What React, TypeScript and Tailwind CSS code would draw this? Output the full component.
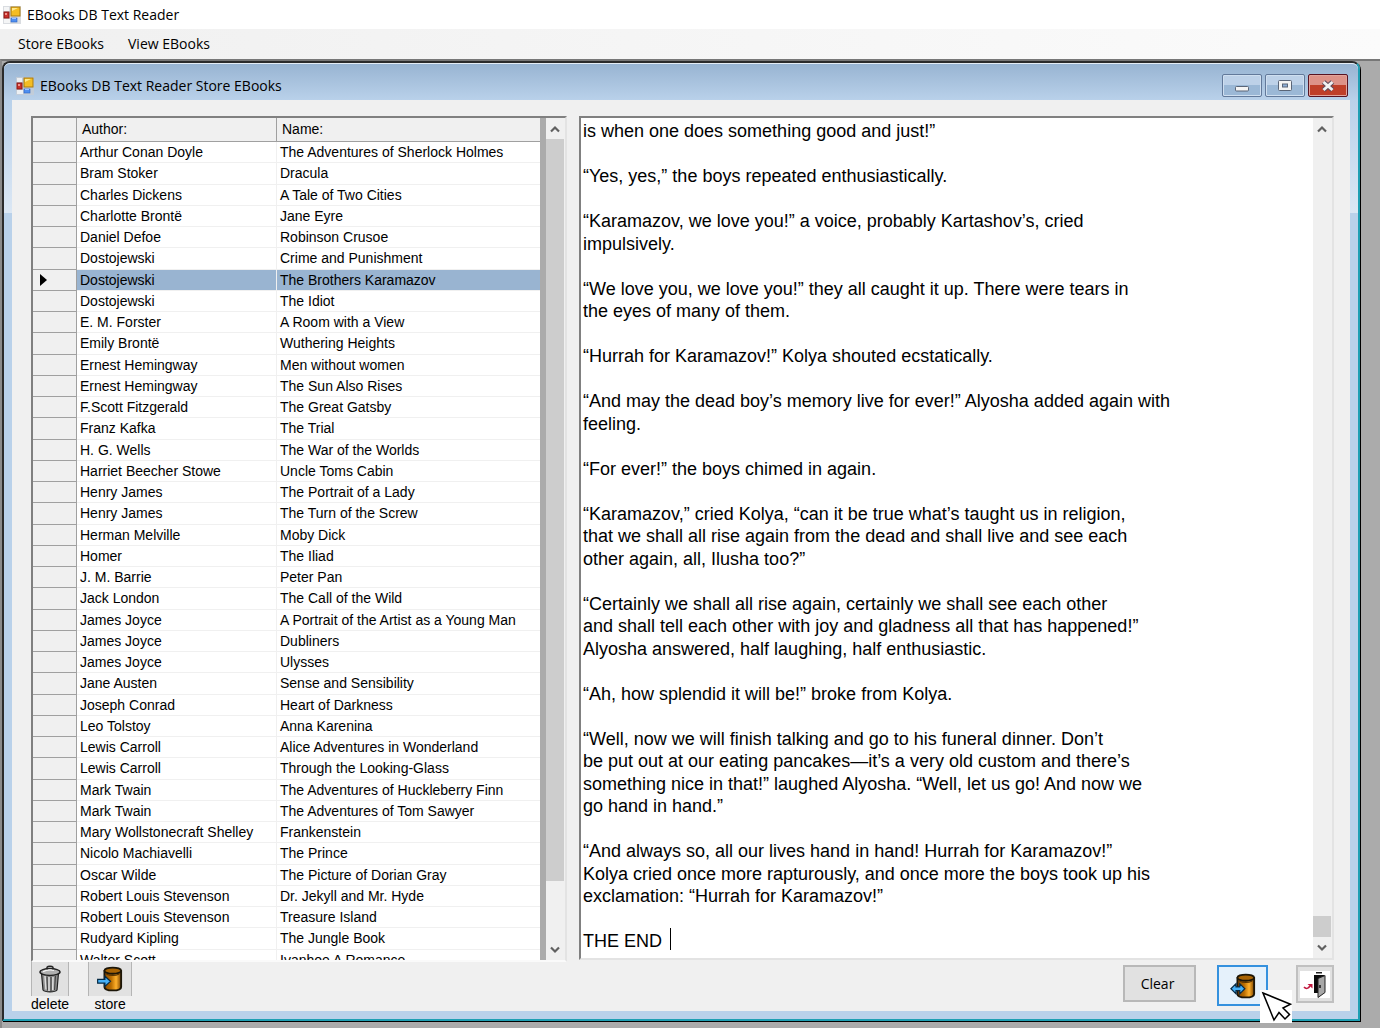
import { useState } from 'react';

const BOOKS: [string, string][] = [
  ['Arthur Conan Doyle', 'The Adventures of Sherlock Holmes'],
  ['Bram Stoker', 'Dracula'],
  ['Charles Dickens', 'A Tale of Two Cities'],
  ['Charlotte Brontë', 'Jane Eyre'],
  ['Daniel Defoe', 'Robinson Crusoe'],
  ['Dostojewski', 'Crime and Punishment'],
  ['Dostojewski', 'The Brothers Karamazov'],
  ['Dostojewski', 'The Idiot'],
  ['E. M. Forster', 'A Room with a View'],
  ['Emily Brontë', 'Wuthering Heights'],
  ['Ernest Hemingway', 'Men without women'],
  ['Ernest Hemingway', 'The Sun Also Rises'],
  ['F.Scott Fitzgerald', 'The Great Gatsby'],
  ['Franz Kafka', 'The Trial'],
  ['H. G. Wells', 'The War of the Worlds'],
  ['Harriet Beecher Stowe', 'Uncle Toms Cabin'],
  ['Henry James', 'The Portrait of a Lady'],
  ['Henry James', 'The Turn of the Screw'],
  ['Herman Melville', 'Moby Dick'],
  ['Homer', 'The Iliad'],
  ['J. M. Barrie', 'Peter Pan'],
  ['Jack London', 'The Call of the Wild'],
  ['James Joyce', 'A Portrait of the Artist as a Young Man'],
  ['James Joyce', 'Dubliners'],
  ['James Joyce', 'Ulysses'],
  ['Jane Austen', 'Sense and Sensibility'],
  ['Joseph Conrad', 'Heart of Darkness'],
  ['Leo Tolstoy', 'Anna Karenina'],
  ['Lewis Carroll', 'Alice Adventures in Wonderland'],
  ['Lewis Carroll', 'Through the Looking-Glass'],
  ['Mark Twain', 'The Adventures of Huckleberry Finn'],
  ['Mark Twain', 'The Adventures of Tom Sawyer'],
  ['Mary Wollstonecraft Shelley', 'Frankenstein'],
  ['Nicolo Machiavelli', 'The Prince'],
  ['Oscar Wilde', 'The Picture of Dorian Gray'],
  ['Robert Louis Stevenson', 'Dr. Jekyll and Mr. Hyde'],
  ['Robert Louis Stevenson', 'Treasure Island'],
  ['Rudyard Kipling', 'The Jungle Book'],
  ['Walter Scott', 'Ivanhoe A Romance'],
];

const BOOK_TEXT = `is when one does something good and just!”

“Yes, yes,” the boys repeated enthusiastically.

“Karamazov, we love you!” a voice, probably Kartashov’s, cried
impulsively.

“We love you, we love you!” they all caught it up. There were tears in
the eyes of many of them.

“Hurrah for Karamazov!” Kolya shouted ecstatically.

“And may the dead boy’s memory live for ever!” Alyosha added again with
feeling.

“For ever!” the boys chimed in again.

“Karamazov,” cried Kolya, “can it be true what’s taught us in religion,
that we shall all rise again from the dead and shall live and see each
other again, all, Ilusha too?”

“Certainly we shall all rise again, certainly we shall see each other
and shall tell each other with joy and gladness all that has happened!”
Alyosha answered, half laughing, half enthusiastic.

“Ah, how splendid it will be!” broke from Kolya.

“Well, now we will finish talking and go to his funeral dinner. Don’t
be put out at our eating pancakes—it’s a very old custom and there’s
something nice in that!” laughed Alyosha. “Well, let us go! And now we
go hand in hand.”

“And always so, all our lives hand in hand! Hurrah for Karamazov!”
Kolya cried once more rapturously, and once more the boys took up his
exclamation: “Hurrah for Karamazov!”

THE END`;

function FormIcon() {
  return (
    <svg className="h-[18px] w-[18px] shrink-0" viewBox="0 0 18 18" aria-hidden="true">
      <rect width="18" height="18" fill="#c9cdd3" opacity=".7" />
      <rect x="1" y="1" width="5" height="4" fill="#fff" opacity=".7" />
      <rect x="1" y="13" width="6" height="4" fill="#fff" opacity=".7" />
      <rect x="8" y="1" width="9" height="9" fill="#f4bd22" stroke="#a87a10" />
      <path d="M9 5V2h6z" fill="#ffe98c" />
      <rect x="1" y="6" width="5" height="6" fill="#c9302c" stroke="#8c1713" />
      <rect x="2" y="7" width="2" height="2" fill="#f0938c" />
      <rect x="8" y="12" width="6" height="4" fill="#4f8ff0" stroke="#2b62c4" strokeWidth=".6" />
      <rect x="9" y="12" width="4" height="1" fill="#9cc4ff" />
    </svg>
  );
}

function Chevron({ down }: { down?: boolean }) {
  return (
    <svg className="h-2 w-[10px]" viewBox="0 0 10 8" aria-hidden="true">
      <path d={down ? 'M1 1.5l4 4 4-4' : 'M1 6.5l4-4 4 4'} fill="none" stroke="#606060" strokeWidth="2.2" />
    </svg>
  );
}

function TrashIcon() {
  return (
    <svg className="h-7 w-6" viewBox="0 0 24 28" aria-hidden="true">
      <path d="M3.5 8l1.500 17c2 2.500 12 2.500 14 0l1.500-17z" fill="#8f8f8f" stroke="#222" strokeWidth="1.200" />
      <path d="M7 11l1 13.500M11 12v14M15 12l-.3 13" stroke="#dedede" strokeWidth="1.500" />
      <path d="M9 11.500l.5 14M13 12v14M17.500 11l-1 14" stroke="#444" strokeWidth="1.100" />
      <ellipse cx="12" cy="7" rx="10" ry="3.400" fill="#b0b0b0" stroke="#222" strokeWidth="1.500" />
      <path d="M5 6.800c3-2 8-2 11-1.500" stroke="#f4f4f4" strokeWidth="1.300" fill="none" />
      <path d="M9 4.500V2.200C10 1 14 1 15 2.200V4.500" stroke="#222" strokeWidth="1.400" fill="none" />
    </svg>
  );
}

function DatabaseIcon({ both }: { both?: boolean }) {
  return (
    <svg className="h-[26px] w-[26px]" viewBox="0 0 28 28" aria-hidden="true">
      <defs>
        <linearGradient id="barrel">
          <stop offset="0" stopColor="#8a4b00" />
          <stop offset=".4" stopColor="#b86c00" />
          <stop offset=".7" stopColor="#ffb12b" />
          <stop offset="1" stopColor="#7a4300" />
        </linearGradient>
      </defs>
      <path d="M8 5.500v17c0 5 18 5 18 0v-17z" fill="url(#barrel)" stroke="#1c1608" strokeWidth="2" />
      <ellipse cx="17" cy="5" rx="9" ry="3.300" fill="#a86303" stroke="#1c1608" strokeWidth="2" />
      <path d="M10 8.500c4 2 10 2 14 0" fill="none" stroke="#5c3500" strokeWidth="1.200" />
      {both ? (
        <path d="M1 17l5.500-5.500v3.500h4v-3.500L16 17l-5.500 5.500V19h-4v3.500z" fill="#45b0f7" stroke="#062a44" strokeWidth="1.300" />
      ) : (
        <path d="M.7 14.500h7.800v-3.500l6 5.500-6 5.500v-3.500H.7z" fill="#45b0f7" stroke="#062a44" strokeWidth="1.300" />
      )}
    </svg>
  );
}

function ExitIcon() {
  return (
    <svg className="h-[27px] w-[30px]" viewBox="0 0 30 27" aria-hidden="true">
      <rect width="30" height="27" fill="#fff" />
      <path d="M16 1h6v1.500h-6z" fill="#222" />
      <path d="M14 4h10v18H14z" fill="#0b0b0b" />
      <path d="M18 7.500l7-3v17l-7 5z" fill="#a7a7a7" stroke="#222" />
      <path d="M20 14v3" stroke="#111" strokeWidth="1.500" />
      <path d="M4 16c2 2.500 4.500 1.500 6-1" fill="none" stroke="#c2183f" strokeWidth="1.500" />
      <path d="M7.500 13h5v4.500z" fill="#c2183f" />
    </svg>
  );
}

function PointerIcon() {
  return (
    <svg className="pointer-events-none absolute top-[23px] left-[41px] h-[33px] w-8 bg-white" viewBox="0 0 32 33" aria-hidden="true">
      <path d="M3 3l27.500 11.200-7.500 3.800 6.500 6.500-4.500 4.500-6-6.500-5 7.500z" fill="#fff" stroke="#000" strokeWidth="1.500" />
    </svg>
  );
}

function ScrollBar({ thumb }: { thumb: 'top' | 'bottom' }) {
  return (
    <div className="flex w-[19px] shrink-0 flex-col bg-[#f0f0f0] pr-px">
      <button type="button" aria-label="Scroll up" className="flex h-[21px] items-center justify-center">
        <Chevron />
      </button>
      {thumb === 'bottom' && <div className="flex-1" />}
      <div className={thumb === 'top' ? 'h-[742px] bg-[#cdcdcd]' : 'h-[21px] bg-[#cdcdcd]'} />
      {thumb === 'top' && <div className="flex-1" />}
      <button type="button" aria-label="Scroll down" className="flex h-[21px] items-center justify-center">
        <Chevron down />
      </button>
    </div>
  );
}

const CAPTION_BUTTON =
  'flex h-[23px] w-10 items-center justify-center rounded-[2px] border border-[#62799a] bg-linear-to-b from-[#bdd1e8] from-50% to-[#9bb8d6] to-50% inset-ring inset-ring-[#cfdff0]';

function CaptionButtons() {
  return (
    <div className="flex gap-[3px]">
      <button type="button" aria-label="Minimize" className={CAPTION_BUTTON}>
        <svg className="h-[14px] w-4" viewBox="0 0 16 14">
          <rect x="1.500" y="7.500" width="13" height="4.500" rx="1" fill="#f4f4f4" stroke="#5a6577" />
        </svg>
      </button>
      <button type="button" aria-label="Maximize" className={CAPTION_BUTTON}>
        <svg className="h-[14px] w-4" viewBox="0 0 16 14">
          <rect x="1.500" y="1.500" width="13" height="10" rx="1" fill="#f4f4f4" stroke="#5a6577" />
          <rect x="5.500" y="5" width="5" height="3" fill="#8fb0d8" stroke="#5a6577" />
        </svg>
      </button>
      <button
        type="button"
        aria-label="Close"
        className="flex h-[23px] w-10 items-center justify-center rounded-[2px] border border-[#581322] bg-linear-to-b from-[#dd9288] from-50% to-[#bf3f29] to-50% inset-ring inset-ring-[#e2a49b]"
      >
        <svg className="h-[14px] w-4" viewBox="0 0 16 14">
          <path d="M3.500 3l9 8M12.500 3l-9 8" stroke="#5d4a5a" strokeWidth="5" />
          <path d="M3.500 3l9 8M12.500 3l-9 8" stroke="#f2f2f2" strokeWidth="3" />
        </svg>
      </button>
    </div>
  );
}

export default function App() {
  const [selected, setSelected] = useState(6);
  const [text, setText] = useState(BOOK_TEXT);

  return (
    <div className="flex h-screen flex-col overflow-hidden bg-[#ababab] font-['Open_Sans',sans-serif] text-sm text-black">
      <header className="flex h-[29px] shrink-0 items-center gap-[6px] bg-white pl-[3px]">
        <FormIcon />
        <h1>EBooks DB Text Reader</h1>
      </header>
      <nav className="flex h-[30px] shrink-0 items-center gap-6 bg-linear-to-r from-[#f0f0f0] to-[#fbfbfb] pl-[18px]">
        <button type="button">Store EBooks</button>
        <button type="button">View EBooks</button>
      </nav>

      <div className="flex min-h-0 flex-1 flex-col border-t-2 border-l-2 border-t-[#777] border-l-[#8a8a8a] pr-5 pb-[7px]">
        <section className="flex min-h-0 flex-1 flex-col rounded-t-lg border-2 border-[#2b2b2b] border-r-[#1e9fb3] border-b-[#1e9fb3] bg-[linear-gradient(to_bottom,#b9d1ea_37px,#dbe7f4_150px,#b9d1ea_150px)] px-2 pb-2 shadow-[1px_1px_0_#000]">
          <div className="-mx-2 flex h-[37px] shrink-0 items-center gap-[6px] rounded-t-md border-t border-[#e4edf6] bg-linear-to-b from-[#98b4d2] to-[#b9d1ea] pt-[7px] pr-[10px] pl-3">
            <FormIcon />
            <h2 className="flex-1">EBooks DB Text Reader Store EBooks</h2>
            <CaptionButtons />
          </div>

          <div className="flex min-h-0 flex-1 flex-col bg-[#f0f0f0] pt-4 pr-4 pl-[19px] font-['Liberation_Sans',sans-serif]">
            <div className="flex min-h-0 flex-1 gap-3">
              <div className="flex w-[536px] shrink-0 overflow-hidden border-2 border-t-[#808080] border-r-[#e3e3e3] border-b-[#fafafa] border-l-[#808080] bg-white">
                <div className="min-w-0 flex-1 overflow-hidden border-r-[6px] border-[#ababab]">
                  <table className="h-[853px] w-full table-fixed border-separate border-spacing-0 text-left leading-4">
                    <thead>
                      <tr className="h-6 bg-[#f0f0f0]">
                        <th aria-label="Row" className="w-11 border-r border-b border-[#a0a0a0]" />
                        <th className="w-[200px] border-r border-b border-[#a0a0a0] p-0 pb-[2px] pl-[5px] font-normal">Author:</th>
                        <th className="border-b border-[#a0a0a0] p-0 pb-[2px] pl-[5px] font-normal">Name:</th>
                      </tr>
                    </thead>
                    <tbody>
                      {BOOKS.map(([author, name], i) => (
                        <tr key={i} onClick={() => setSelected(i)} className={i === selected ? 'bg-[#99b4d1]' : 'bg-white'}>
                          <td className="border-r border-b border-[#a0a0a0] bg-[#f0f0f0] p-0">
                            {i === selected && (
                              <svg className="ml-[7px] h-3 w-[7px]" viewBox="0 0 7 12">
                                <path d="M0 0l7 6-7 6z" />
                              </svg>
                            )}
                          </td>
                          <td className="truncate border-r border-b border-[#f0f0f0] p-0 pl-[3px]">{author}</td>
                          <td className="truncate border-b border-[#f0f0f0] p-0 pl-[3px]">{name}</td>
                        </tr>
                      ))}
                    </tbody>
                  </table>
                </div>
                <ScrollBar thumb="top" />
              </div>

              <div className="relative mb-[2px] flex min-w-0 flex-1 border-2 border-t-[#808080] border-r-[#e3e3e3] border-b-[#e3e3e3] border-l-[#808080] bg-white">
                <textarea
                  aria-label="Book text"
                  value={text}
                  onChange={(e) => setText(e.target.value)}
                  spellCheck={false}
                  className="min-w-0 flex-1 resize-none overflow-hidden pt-[2px] pl-[2px] text-lg leading-tight outline-none"
                />
                <span className="absolute bottom-2 left-[89px] h-[22px] w-px bg-black" />
                <ScrollBar thumb="bottom" />
              </div>
            </div>

            <div className="flex h-[49px] shrink-0 items-start justify-between">
              <div className="flex gap-[19px]">
                <button type="button" className="flex flex-col items-center leading-4">
                  <span className="flex h-[34px] w-[38px] items-center justify-center border-x border-[#b5b5b5] bg-[#e1e1e1]">
                    <TrashIcon />
                  </span>
                  delete
                </button>
                <button type="button" className="flex flex-col items-center leading-4">
                  <span className="flex h-[34px] w-11 items-center justify-center border-x border-[#b5b5b5] bg-[#e1e1e1]">
                    <DatabaseIcon />
                  </span>
                  store
                </button>
              </div>
              <div className="flex items-start pt-[3px] font-['Open_Sans',sans-serif]">
                <button type="button" onClick={() => setText('')} className="mr-[21px] h-[37px] w-[73px] border-2 border-[#b8b8b8] bg-[#e1e1e1] pr-1">
                  Clear
                </button>
                <button type="button" aria-label="Load book" className="relative mr-7 flex h-[41px] w-[51px] items-center justify-center border-2 border-[#3591de] bg-[#e5f1fb]">
                  <DatabaseIcon both />
                  <PointerIcon />
                </button>
                <button type="button" aria-label="Exit" className="flex h-[38px] w-[38px] items-center justify-center border-2 border-[#c0c0c0] bg-[#e1e1e1]">
                  <ExitIcon />
                </button>
              </div>
            </div>
          </div>
        </section>
      </div>
    </div>
  );
}
